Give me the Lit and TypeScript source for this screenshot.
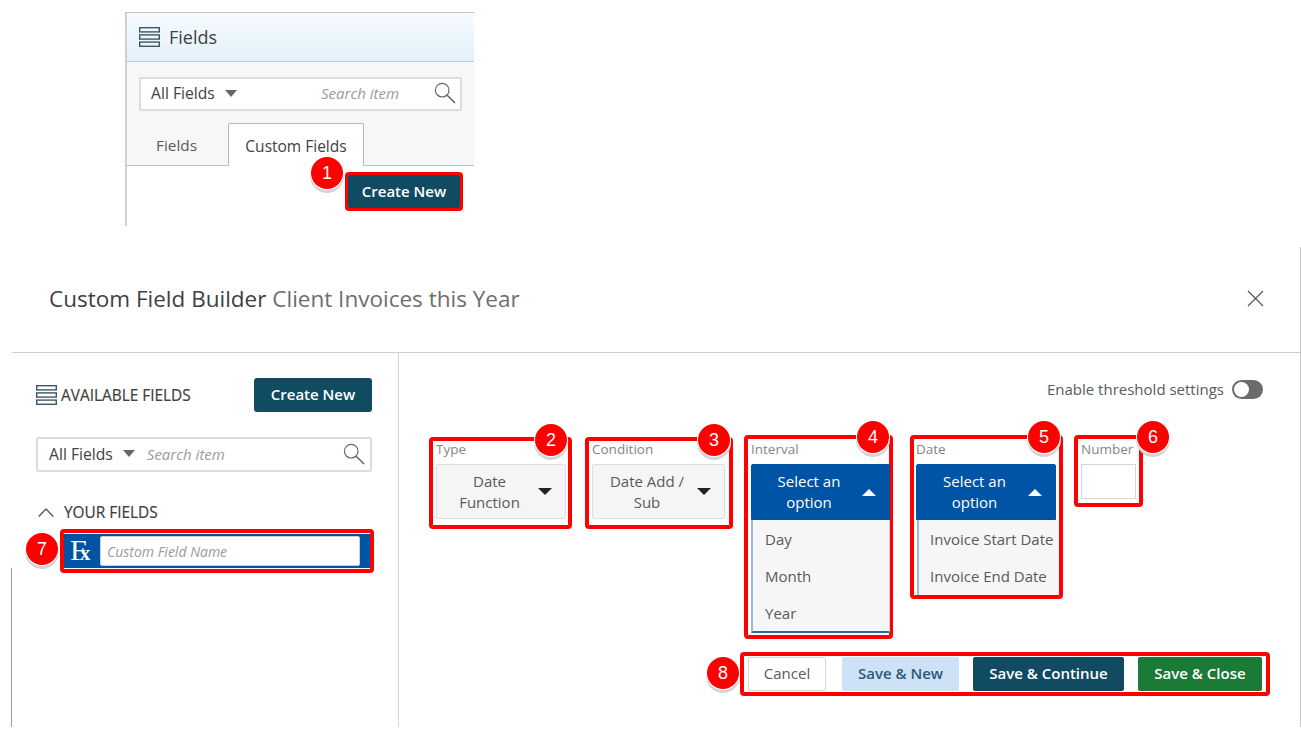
import { LitElement, html, css } from "lit";
import { customElement } from "lit/decorators.js";

const listIcon = html`<svg class="list-ico" viewBox="0 0 21 20" fill="none" stroke="#3f5563" stroke-width="1.4"><rect x="0.7" y="0.7" width="19.6" height="4.2"/><rect x="0.7" y="7.9" width="19.6" height="4.2"/><rect x="0.7" y="15.1" width="19.6" height="4.2"/></svg>`;
const searchIcon = html`<svg class="search-ico" viewBox="0 0 22 22" fill="none" stroke="#666" stroke-width="1.2"><circle cx="8.2" cy="8.2" r="6.8"/><path d="M13.2 13.2 21 21" stroke-width="1.6"/></svg>`;
const caret = (cls: string) => html`<i class="caret ${cls}"></i>`;
const badge = (n: number) => html`<span class="badge">${n}</span>`;

@customElement("app-root")
export class AppRoot extends LitElement {
  static styles = css`
    :host { display: block; width: 1301px; height: 739px; overflow: hidden; background: #fff; font-family: "Open Sans", "Liberation Sans", sans-serif; color: #414141; }
    * { box-sizing: border-box; }
    .page { display: flex; flex-direction: column; width: 1301px; height: 739px; }

    /* annotation marks */
    .mark { position: relative; border: 3px solid #f00; border-radius: 4px; box-shadow: inset 0 0 0 1px #f00; }
    .badge { position: absolute; z-index: 3; width: 32px; height: 32px; border-radius: 50%; background: #f00; color: #fff; font: 400 18px/32px "Liberation Sans", Arial, sans-serif; text-align: center; box-shadow: 0 0 0 1px #fff, 0 3px 0 1px #d4d4d4; }

    /* top panel */
    .top { padding: 12px 0 0 125px; height: 247px; flex: none; }
    .panel { width: 349px; height: 214px; border-left: 2px solid #cdd0d4; border-top: 1px solid #bcc5cf; display: flex; flex-direction: column; }
    .panel-head { height: 49px; flex: none; display: flex; align-items: center; gap: 9px; padding-left: 12px; background: linear-gradient(#f7fbfe, #e2f1fb); border-bottom: 1px solid #bccad6; font-size: 18px; color: #414141; }
    .list-ico { width: 21px; height: 20px; flex: none; display: block; }
    .panel-filter { height: 104px; flex: none; background: #f7f7f7; border-bottom: 1px solid #b7c5d3; padding: 15px 12px 0 12px; display: flex; flex-direction: column; }
    .searchbox { display: flex; align-items: center; background: #fff; border: 2px solid #dcdcdc; border-radius: 2px; font-size: 15.7px; color: #414141; }
    .panel-filter .searchbox { height: 34px; padding: 0 4px 2px 10px; flex: none; }
    .searchbox .ph { font-style: italic; color: #9a9a9a; font-size: 15px; }
    .caret { display: block; flex: none; width: 0; height: 0; border-left: 7px solid transparent; border-right: 7px solid transparent; }
    .caret.grey { border-top: 7px solid #666; }
    .search-ico { width: 22px; height: 22px; flex: none; display: block; }
    .panel-filter .caret { margin-left: 10px; border-left-width: 6.5px; border-right-width: 6.5px; }
    .panel-filter .ph { margin-left: auto; margin-right: 35px; }
    .tabs { display: flex; margin-top: 12px; margin-left: -12px; height: 42px; font-size: 15.3px; }
    .tab { display: flex; align-items: center; justify-content: center; width: 101px; color: #5a5a5a; padding: 2px 2px 0 0; }
    .tab.active { width: 136px; background: #fff; color: #414141; border: 1px solid #a9bccd; border-bottom: 0; border-radius: 2px 2px 0 0; height: 43px; padding-right: 0; font-size: 15.5px; }
    .panel-body { flex: 1; background: #fff; display: flex; justify-content: flex-end; padding: 6px 11px 0 0; }
    .panel-body .mark { width: 118px; height: 39px; }
    .panel-body .badge { left: -37px; top: -18px; }
    .btn { display: flex; align-items: center; justify-content: center; border-radius: 2px; font-size: 15px; font-weight: 600; white-space: nowrap; color: #fff; background: #114b62; padding-bottom: 2px; }
    .panel-body .btn { width: 100%; height: 100%; }

    /* builder */
    .builder { flex: 1; margin: 0 0 12px 12px; position: relative; border-right: 1px solid #c8c8c8; display: flex; flex-direction: column; }
    .b-head { height: 106px; flex: none; border-bottom: 1px solid #cfcfcf; display: flex; align-items: center; justify-content: space-between; padding: 0 36px 2px 37px; font-size: 22.5px; color: #3f3f3f; }
    .b-head span { color: #6e6e6e; }
    .close { width: 17px; height: 17px; display: block; }
    .b-body { flex: 1; display: flex; }
    .left { width: 387px; flex: none; border-right: 1px solid #d6d6d6; padding: 25px 26px 0 24px; position: relative; }
    .left::before { content: ""; position: absolute; left: -1px; top: 215px; bottom: 0; width: 1px; background: #9c9c9c; }
    .af { display: flex; align-items: center; height: 34px; }
    .af .list-ico { margin-right: 4px; }
    .af b { font-weight: 400; font-size: 15.4px; color: #414141; flex: 1; -webkit-text-stroke: 0.2px #414141; white-space: nowrap; }
    .af .btn { width: 118px; height: 34px; border-radius: 3px; }
    .left .searchbox { height: 35px; margin-top: 25px; padding: 0 5px 2px 11px; }
    .left .caret { margin: 0 12px 0 10px; border-left-width: 6.5px; border-right-width: 6.5px; }
    .left .ph { flex: 1; }
    .yf { display: flex; align-items: center; gap: 10px; margin-top: 31px; height: 18px; padding-left: 2px; font-size: 15.4px; color: #414141; -webkit-text-stroke: 0.2px #414141; }
    .yf svg { width: 16px; height: 9px; display: block; }
    .left .mark { width: 314px; height: 44px; margin: 8px 0 0 24px; padding: 2px 1px; }
    .left .badge { left: -37px; top: 1px; }
    .fx-row { height: 34px; background: #0054a6; display: flex; align-items: center; padding: 0 10px 0 0; }
    .fx { width: 36px; flex: none; color: #fff; font-family: "Liberation Serif", serif; font-size: 30px; line-height: 30px; padding-left: 6px; white-space: nowrap; }
    .fx small { font-size: 21px; font-weight: 700; margin-left: -7px; }
    .fx-input { flex: 1; height: 30px; background: #fff; border: 1px solid #cfcfcf; border-radius: 2px; font-size: 14px; font-style: italic; color: #9a9a9a; padding-left: 6px; display: flex; align-items: center; white-space: nowrap; }

    .right { flex: 1; padding: 26px 37px 0 30px; display: flex; flex-direction: column; position: relative; }
    .thresh { display: flex; justify-content: flex-end; align-items: center; gap: 8px; font-size: 15px; color: #5a5a5a; height: 20px; }
    .toggle { width: 31px; height: 19px; border-radius: 10px; background: #6b6b6b; padding: 2px; display: block; }
    .knob { display: block; width: 15px; height: 15px; border-radius: 50%; background: #fff; }
    .fields { display: flex; align-items: flex-start; margin-top: 36px; }
    .field { flex: none; }
    .field label { display: block; font-size: 13.5px; line-height: 20px; color: #858585; white-space: nowrap; }
    .f-type { width: 143px; height: 92px; margin: 2px 13px 0 0; padding: 0 3px 0 4px; }
    .f-type label, .f-cond label { margin-top: -1px; }
    .f-cond { width: 148px; height: 92px; margin: 2px 11px 0 0; padding: 0 5px 0 4px; }
    .f-int { width: 149px; height: 204px; margin-right: 17px; padding: 1px 0 0 4px; }
    .f-date { width: 153px; height: 164px; margin-right: 11px; padding: 1px 0 0 3px; }
    .f-num { width: 69px; height: 72px; padding: 1px 4px 0 4px; }
    .select { height: 55px; margin-top: 5px; display: flex; align-items: center; background: #f5f5f5; border: 1px solid #dedede; border-radius: 2px; font-size: 15px; line-height: 21px; color: #5a5a5a; text-align: center; padding-right: 13px; }
    .select span { flex: 1; padding: 0 9px 0 13px; }
    .caret.dark { border-top: 7px solid #222; }
    .caret.up { border-bottom: 7px solid #fff; }
    .select.open { background: #0054a6; border-color: #0054a6; border-radius: 2px 2px 0 0; color: #fff; height: 56px; width: 139px; }
    .f-date .select.open { width: 140px; }
    .menu { background: #f6f6f6; border-left: 2px solid #9fb8d6; border-bottom: 2px solid #2a6aa8; font-size: 15px; color: #5a5a5a; padding-left: 12px; width: 139px; }
    .f-int .menu { height: 113px; display: flex; flex-direction: column; padding-top: 1px; border-right: 1px solid #cfcfcf; }
    .f-date .menu { width: 142px; margin-left: 1px; height: 75px; border-bottom: 0; padding-left: 11px; display: flex; flex-direction: column; }
    .menu div { height: 37.5px; display: flex; align-items: center; white-space: nowrap; }
    .num { height: 35px; margin-top: 5px; border: 1px solid #d6d6d6; background: #fff; }
    .f-type .badge { left: 103px; top: -16px; }
    .f-cond .badge { left: 110px; top: -16px; }
    .f-int .badge { left: 110px; top: -17px; }
    .f-date .badge { left: 115px; top: -17px; }
    .f-num .badge { left: 60px; top: -17px; }

    .foot { position: absolute; left: 341px; top: 299px; width: 530px; height: 44px; display: flex; padding: 2px 5px; }
    .foot .badge { left: -36px; top: 2px; }
    .foot .btn { height: 34px; }
    .foot .b-cancel { width: 78px; margin-right: 16px; background: #fff; color: #5a5a5a; border: 1px solid #d8d8d8; font-weight: 400; }
    .foot .b-new { width: 117px; margin-right: 14px; background: #cde2f7; color: #2d5a78; }
    .foot .b-cont { width: 151px; margin-right: 14px; }
    .foot .b-close { width: 124px; background: #1b7a35; }
  `;

  render() {
    return html`<div class="page">
      <section class="top">
        <div class="panel">
          <div class="panel-head">${listIcon}<span>Fields</span></div>
          <div class="panel-filter">
            <div class="searchbox"><span>All Fields</span>${caret("grey")}<span class="ph">Search item</span>${searchIcon}</div>
            <div class="tabs"><div class="tab">Fields</div><div class="tab active">Custom Fields</div></div>
          </div>
          <div class="panel-body"><div class="mark">${badge(1)}<div class="btn">Create New</div></div></div>
        </div>
      </section>
      <section class="builder">
        <header class="b-head"><div>Custom Field Builder <span>Client Invoices this Year</span></div>
          <svg class="close" viewBox="0 0 17 17" fill="none" stroke="#555" stroke-width="1.2"><path d="M1 1 16 16M16 1 1 16"/></svg></header>
        <div class="b-body">
          <aside class="left">
            <div class="af">${listIcon}<b>AVAILABLE FIELDS</b><div class="btn">Create New</div></div>
            <div class="searchbox"><span>All Fields</span>${caret("grey")}<span class="ph">Search item</span>${searchIcon}</div>
            <div class="yf"><svg viewBox="0 0 16 9" fill="none" stroke="#555" stroke-width="1.3"><path d="M.7 8.5 8 1l7.3 7.5"/></svg><span>YOUR FIELDS</span></div>
            <div class="mark">${badge(7)}<div class="fx-row"><div class="fx">F<small>x</small></div><div class="fx-input">Custom Field Name</div></div></div>
          </aside>
          <div class="right">
            <div class="thresh"><span>Enable threshold settings</span><span class="toggle"><i class="knob"></i></span></div>
            <div class="fields">
              <div class="field mark f-type">${badge(2)}<label>Type</label><div class="select"><span>Date Function</span>${caret("dark")}</div></div>
              <div class="field mark f-cond">${badge(3)}<label>Condition</label><div class="select"><span>Date Add / Sub</span>${caret("dark")}</div></div>
              <div class="field mark f-int">${badge(4)}<label>Interval</label><div class="select open"><span>Select an option</span>${caret("up")}</div><div class="menu"><div>Day</div><div>Month</div><div>Year</div></div></div>
              <div class="field mark f-date">${badge(5)}<label>Date</label><div class="select open"><span>Select an option</span>${caret("up")}</div><div class="menu"><div>Invoice Start Date</div><div>Invoice End Date</div></div></div>
              <div class="field mark f-num">${badge(6)}<label>Number</label><div class="num"></div></div>
            </div>
            <div class="mark foot">${badge(8)}
              <div class="btn b-cancel">Cancel</div><div class="btn b-new">Save &amp; New</div><div class="btn b-cont">Save &amp; Continue</div><div class="btn b-close">Save &amp; Close</div>
            </div>
          </div>
        </div>
      </section>
    </div>`;
  }
}
